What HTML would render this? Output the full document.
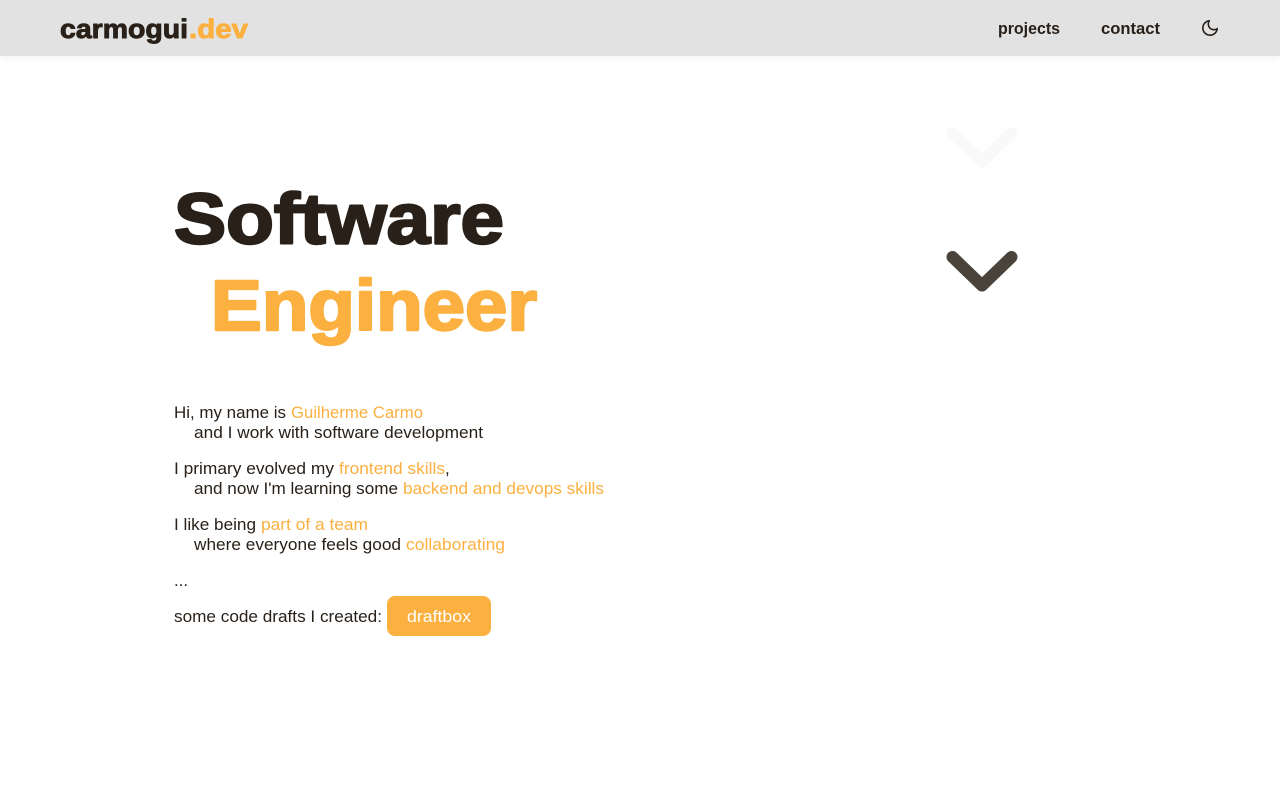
<!DOCTYPE html>
<html lang="en">
<head>
<meta charset="utf-8">
<title>carmogui.dev</title>
<style>
html,body{margin:0;padding:0;width:1280px;height:800px;overflow:hidden;background:#fff}
header{position:absolute;left:0;top:0;width:1280px;height:56px;background:#e2e2e2;box-shadow:0 2px 6px rgba(0,0,0,.05)}
svg.page{position:absolute;left:0;top:0}
text{font-family:"Liberation Sans",sans-serif;fill:#292119}
.o{fill:#fbb040}
.b{font-size:17px}
.n{font-size:17px;font-weight:700}
.h{font-size:71px;font-weight:700;stroke-width:2.4px;stroke-linejoin:round}
.l{font-size:26.500px;font-weight:700;stroke-width:.9px;stroke-linejoin:round}
</style>
</head>
<body>
<header></header>
<svg class="page" width="1280" height="800" viewBox="0 0 1280 800" xmlns="http://www.w3.org/2000/svg">
  <text class="l" x="60" y="38" textLength="128" lengthAdjust="spacingAndGlyphs" stroke="#292119">carmogui</text>
  <text class="l o" x="189" y="38" textLength="59" lengthAdjust="spacingAndGlyphs" stroke="#fbb040">.dev</text>

  <text class="n" x="998" y="34" textLength="62" lengthAdjust="spacingAndGlyphs">projects</text>
  <text class="n" x="1101" y="34" textLength="59" lengthAdjust="spacingAndGlyphs">contact</text>
  <g transform="translate(1200.400 18.400) scale(.8)" fill="none" stroke="#292119" stroke-width="2" stroke-linecap="round" stroke-linejoin="round">
    <path d="M21 12.79A9 9 0 1 1 11.21 3 7 7 0 0 0 21 12.79z"/>
  </g>

  <path d="M952.500 133L982 161.500L1011.500 133" fill="none" stroke="#f9f9f9" stroke-width="12" stroke-linecap="round" stroke-linejoin="round"/>
  <path d="M952.500 257L982 285.500L1011.500 257" fill="none" stroke="#4a433b" stroke-width="12" stroke-linecap="round" stroke-linejoin="round"/>

  <text class="h" x="174" y="243.500" textLength="330" lengthAdjust="spacingAndGlyphs" stroke="#292119">Software</text>
  <text class="h o" x="211" y="330" textLength="326" lengthAdjust="spacingAndGlyphs" stroke="#fbb040">Engineer</text>

  <text class="b" x="174" y="418" textLength="112" lengthAdjust="spacingAndGlyphs">Hi, my name is</text>
  <text class="b o" x="291" y="418" textLength="132" lengthAdjust="spacingAndGlyphs">Guilherme Carmo</text>
  <text class="b" x="194" y="438" textLength="289" lengthAdjust="spacingAndGlyphs">and I work with software development</text>

  <text class="b" x="174" y="474" textLength="160" lengthAdjust="spacingAndGlyphs">I primary evolved my</text>
  <text class="b o" x="339" y="474" textLength="106" lengthAdjust="spacingAndGlyphs">frontend skills</text>
  <text class="b" x="445" y="474">,</text>
  <text class="b" x="194" y="494" textLength="204" lengthAdjust="spacingAndGlyphs">and now I'm learning some</text>
  <text class="b o" x="403" y="494" textLength="201" lengthAdjust="spacingAndGlyphs">backend and devops skills</text>

  <text class="b" x="174" y="530" textLength="82" lengthAdjust="spacingAndGlyphs">I like being</text>
  <text class="b o" x="261" y="530" textLength="107" lengthAdjust="spacingAndGlyphs">part of a team</text>
  <text class="b" x="194" y="550" textLength="207" lengthAdjust="spacingAndGlyphs">where everyone feels good</text>
  <text class="b o" x="406" y="550" textLength="99" lengthAdjust="spacingAndGlyphs">collaborating</text>

  <text class="b" x="174" y="586" textLength="14" lengthAdjust="spacingAndGlyphs">...</text>
  <text class="b" x="174" y="622" textLength="208" lengthAdjust="spacingAndGlyphs">some code drafts I created:</text>

  <rect x="387" y="596" width="104" height="40" rx="8" fill="#fbb040"/>
  <text class="b" x="407" y="622" textLength="64" lengthAdjust="spacingAndGlyphs" style="fill:#fff">draftbox</text>
</svg>
</body>
</html>
